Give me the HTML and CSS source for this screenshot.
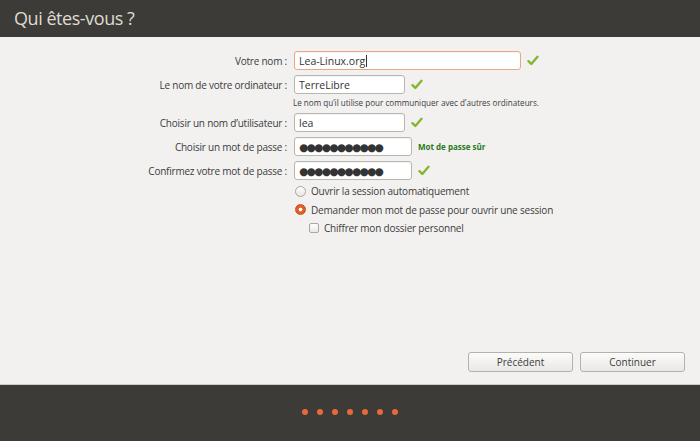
FILE: index.html
```html
<!DOCTYPE html>
<html lang="fr">
<head>
<meta charset="utf-8">
<title>Qui êtes-vous ?</title>
<link rel="stylesheet" href="styles.css">
</head>
<body>
<div class="window">
  <header class="topbar"><h1 class="title">Qui êtes-vous ?</h1></header>
  <main class="content">
    <div class="form">
      <div class="row">
        <label class="label">Votre nom :</label>
        <div class="field field-wide field-focus">Lea-Linux.org<span class="caret"></span></div>
        <svg class="check" viewBox="0 0 12 11"><path d="M1.5 6.2 L4.3 9 L10.5 1.8" fill="none" stroke="#86b52f" stroke-width="2.4" stroke-linecap="round" stroke-linejoin="round"/></svg>
      </div>
      <div class="row">
        <label class="label">Le nom de votre ordinateur :</label>
        <div class="field field-mid">TerreLibre</div>
        <svg class="check" viewBox="0 0 12 11"><path d="M1.5 6.2 L4.3 9 L10.5 1.8" fill="none" stroke="#86b52f" stroke-width="2.4" stroke-linecap="round" stroke-linejoin="round"/></svg>
      </div>
      <div class="hint">Le nom qu’il utilise pour communiquer avec d’autres ordinateurs.</div>
      <div class="row">
        <label class="label">Choisir un nom d’utilisateur :</label>
        <div class="field field-mid">lea</div>
        <svg class="check" viewBox="0 0 12 11"><path d="M1.5 6.2 L4.3 9 L10.5 1.8" fill="none" stroke="#86b52f" stroke-width="2.4" stroke-linecap="round" stroke-linejoin="round"/></svg>
      </div>
      <div class="row">
        <label class="label">Choisir un mot de passe :</label>
        <div class="field field-pw"><span class="dots">●●●●●●●●●●●</span></div>
        <span class="strength">Mot de passe sûr</span>
      </div>
      <div class="row">
        <label class="label">Confirmez votre mot de passe :</label>
        <div class="field field-pw"><span class="dots">●●●●●●●●●●●</span></div>
        <svg class="check" viewBox="0 0 12 11"><path d="M1.5 6.2 L4.3 9 L10.5 1.8" fill="none" stroke="#86b52f" stroke-width="2.4" stroke-linecap="round" stroke-linejoin="round"/></svg>
      </div>
      <div class="options">
        <div class="option"><span class="radio"></span>Ouvrir la session automatiquement</div>
        <div class="option"><span class="radio radio-on"></span>Demander mon mot de passe pour ouvrir une session</div>
        <div class="option option-sub"><span class="checkbox"></span>Chiffrer mon dossier personnel</div>
      </div>
    </div>
    <div class="actions">
      <button class="btn">Précédent</button>
      <button class="btn">Continuer</button>
    </div>
  </main>
  <footer class="bottombar">
    <div class="progress">
      <span class="dot"></span><span class="dot"></span><span class="dot"></span><span class="dot"></span><span class="dot"></span><span class="dot"></span><span class="dot"></span>
    </div>
  </footer>
</div>
</body>
</html>
```
FILE: styles.css
```css
* { box-sizing: border-box; }
html, body { margin: 0; padding: 0; }
body {
  font-family: "Open Sans", "Noto Sans", sans-serif;
  color: #3c3c3c;
  background: #f2f1f0;
}
.window {
  width: 700px;
  height: 441px;
  display: flex;
  flex-direction: column;
}
.topbar {
  height: 37px;
  background: #3c3b37;
  display: flex;
  align-items: center;
  padding-left: 14px;
}
.title {
  margin: 0;
  font-weight: 400;
  font-size: 18px;
  color: #dfdbd2;
  letter-spacing: -0.45px;
  padding-bottom: 2px;
}
.content {
  flex: 1;
  display: flex;
  flex-direction: column;
  background: #f2f1f0;
  border-bottom: 1px solid #cfccc6;
}
.form {
  padding-top: 14px;
  display: flex;
  flex-direction: column;
  flex: 1;
}
.row {
  display: flex;
  align-items: center;
  height: 19px;
  margin-bottom: 5px;
}
.row:nth-child(2) { margin-bottom: 3px; }
.label {
  width: 289px;
  text-align: right;
  padding-right: 2px;
  font-size: 10px;
  color: #3c3c3c;
  letter-spacing: -0.22px;
}
.field {
  margin-left: 5px;
  height: 19px;
  border: 1px solid #b9b6b0;
  border-radius: 3px;
  background: #fff;
  font-size: 10.5px;
  color: #333;
  padding-left: 4px;
  display: flex;
  align-items: center;
  box-shadow: inset 0 1px 1px rgba(0,0,0,0.05);
}
.field-wide { width: 227px; }
.field-mid { width: 111px; }
.field-pw { width: 118px; }
.field-focus { border-color: #eba68a; }
.caret {
  display: inline-block;
  width: 1px;
  height: 12px;
  background: #333;
  margin-left: 1px;
}
.dots {
  font-family: "DejaVu Sans", sans-serif;
  font-size: 10.5px;
  letter-spacing: -1.6px;
  color: #333;
  padding-left: 0;
}
.check {
  width: 12px;
  height: 11px;
  margin-left: 6px;
}
.strength {
  margin-left: 6px;
  font-size: 8px;
  font-weight: 700;
  color: #2a7a1c;
}
.hint {
  margin-left: 293px;
  font-size: 8.1px;
  color: #3c3c3c;
  margin-bottom: 5px;
  height: 11px;
  line-height: 11px;
}
.options {
  margin-left: 295px;
  display: flex;
  flex-direction: column;
  margin-top: -3px;
}
.option {
  display: flex;
  align-items: center;
  font-size: 10px;
  letter-spacing: -0.2px;
  height: 18.4px;
  color: #3c3c3c;
}
.option-sub { margin-left: 14px; }
.radio {
  width: 11px;
  height: 11px;
  border-radius: 50%;
  border: 1px solid #aaa69f;
  background: linear-gradient(#fdfdfd, #e8e6e3);
  margin-right: 5px;
  flex: none;
}
.radio-on {
  border-color: #c4501f;
  background: radial-gradient(circle, #fff 0 1.6px, #e0602a 2.2px);
}
.checkbox {
  width: 10px;
  height: 10px;
  border-radius: 2px;
  border: 1px solid #aaa69f;
  background: linear-gradient(#fdfdfd, #ebe9e6);
  margin-right: 5px;
  flex: none;
}
.actions {
  display: flex;
  justify-content: flex-end;
  gap: 7px;
  padding-right: 15px;
  padding-bottom: 12px;
}
.btn {
  width: 105px;
  height: 20px;
  border: 1px solid #b6b2ab;
  border-radius: 3px;
  background: linear-gradient(#fbfbfa, #eae8e5);
  font-family: "Open Sans", "Noto Sans", sans-serif;
  font-size: 10px;
  color: #3c3c3c;
  padding: 0;
}
.bottombar {
  height: 56px;
  background: #3c3b37;
  display: flex;
  align-items: center;
  justify-content: center;
}
.progress {
  display: flex;
  gap: 9px;
  margin-left: 0;
  margin-top: -2px;
}
.dot {
  width: 6px;
  height: 6px;
  border-radius: 50%;
  background: #e8693a;
}
```
